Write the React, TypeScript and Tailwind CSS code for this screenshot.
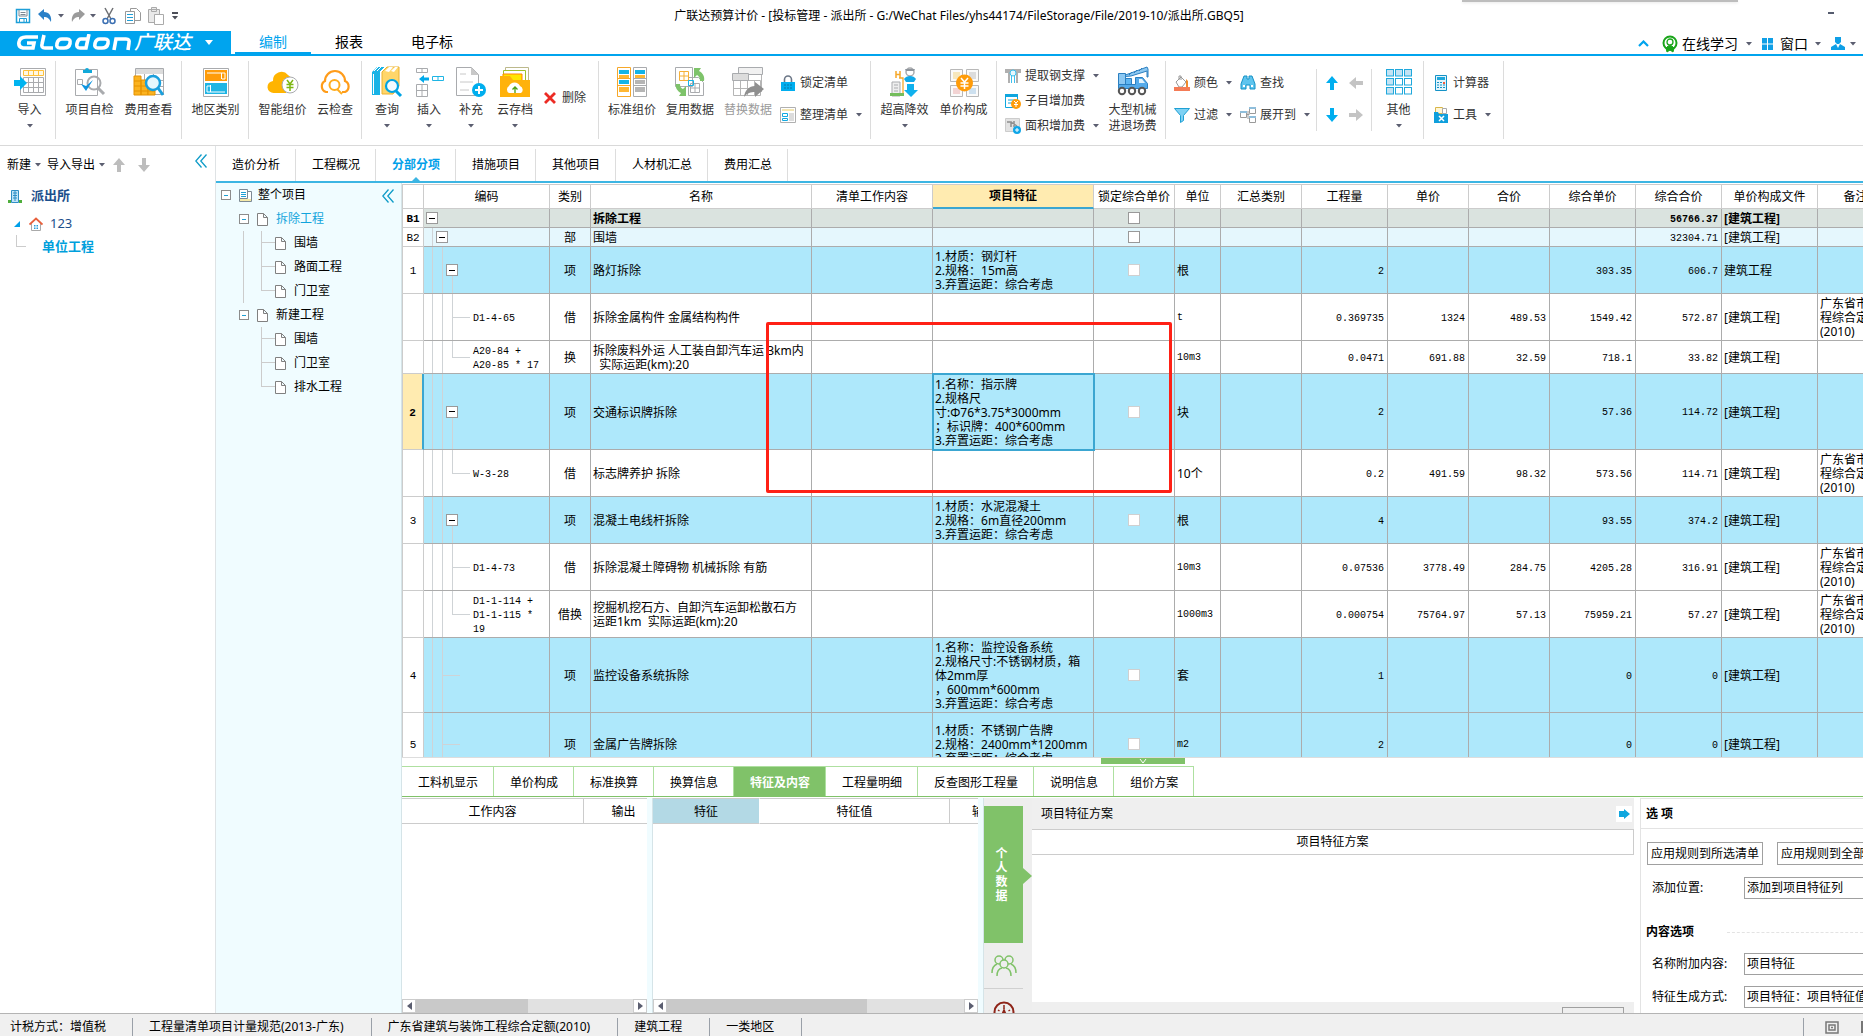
import { ReactNode } from "react";
import clsx from "clsx";

type Row = {
  no: string;
  kind: "part" | "section" | "item" | "quota";
  height: string;
  last?: boolean;
  leaf?: boolean;
  selected?: boolean;
  code?: string[];
  type?: string;
  name?: string[];
  feature?: string[];
  unit?: string;
  qty?: string;
  price?: string;
  total?: string;
  unitPrice?: string;
  sum?: string;
  file?: string;
  note?: boolean;
};

const rows: Row[] = [
  { no: "B1", kind: "part", height: "h-[19px]", name: ["拆除工程"], sum: "56766.37", file: "[建筑工程]" },
  { no: "B2", kind: "section", height: "h-[19px]", type: "部", name: ["围墙"], sum: "32304.71", file: "[建筑工程]" },
  {
    no: "1",
    kind: "item",
    height: "h-[47px]",
    type: "项",
    name: ["路灯拆除"],
    feature: ["1.材质：钢灯杆", "2.规格：15m高", "3.弃置运距：综合考虑"],
    unit: "根",
    qty: "2",
    unitPrice: "303.35",
    sum: "606.7",
    file: "建筑工程",
  },
  {
    no: "",
    kind: "quota",
    height: "h-[47px]",
    code: ["D1-4-65"],
    type: "借",
    name: ["拆除金属构件 金属结构构件"],
    unit: "t",
    qty: "0.369735",
    price: "1324",
    total: "489.53",
    unitPrice: "1549.42",
    sum: "572.87",
    file: "[建筑工程]",
    note: true,
  },
  {
    no: "",
    kind: "quota",
    height: "h-[33px]",
    last: true,
    code: ["A20-84 +", "A20-85 * 17"],
    type: "换",
    name: ["拆除废料外运 人工装自卸汽车运 3km内", "  实际运距(km):20"],
    unit: "10m3",
    qty: "0.0471",
    price: "691.88",
    total: "32.59",
    unitPrice: "718.1",
    sum: "33.82",
    file: "[建筑工程]",
  },
  {
    no: "2",
    kind: "item",
    height: "h-[76px]",
    selected: true,
    type: "项",
    name: ["交通标识牌拆除"],
    feature: ["1.名称：指示牌", "2.规格尺", "寸:Φ76*3.75*3000mm", "；标识牌：400*600mm", "3.弃置运距：综合考虑"],
    unit: "块",
    qty: "2",
    unitPrice: "57.36",
    sum: "114.72",
    file: "[建筑工程]",
  },
  {
    no: "",
    kind: "quota",
    height: "h-[47px]",
    last: true,
    code: ["W-3-28"],
    type: "借",
    name: ["标志牌养护 拆除"],
    unit: "10个",
    qty: "0.2",
    price: "491.59",
    total: "98.32",
    unitPrice: "573.56",
    sum: "114.71",
    file: "[建筑工程]",
    note: true,
  },
  {
    no: "3",
    kind: "item",
    height: "h-[47px]",
    type: "项",
    name: ["混凝土电线杆拆除"],
    feature: ["1.材质：水泥混凝土", "2.规格：6m直径200mm", "3.弃置运距：综合考虑"],
    unit: "根",
    qty: "4",
    unitPrice: "93.55",
    sum: "374.2",
    file: "[建筑工程]",
  },
  {
    no: "",
    kind: "quota",
    height: "h-[47px]",
    code: ["D1-4-73"],
    type: "借",
    name: ["拆除混凝土障碍物 机械拆除 有筋"],
    unit: "10m3",
    qty: "0.07536",
    price: "3778.49",
    total: "284.75",
    unitPrice: "4205.28",
    sum: "316.91",
    file: "[建筑工程]",
    note: true,
  },
  {
    no: "",
    kind: "quota",
    height: "h-[47px]",
    last: true,
    code: ["D1-1-114 +", "D1-1-115 *", "19"],
    type: "借换",
    name: ["挖掘机挖石方、自卸汽车运卸松散石方", "运距1km  实际运距(km):20"],
    unit: "1000m3",
    qty: "0.000754",
    price: "75764.97",
    total: "57.13",
    unitPrice: "75959.21",
    sum: "57.27",
    file: "[建筑工程]",
    note: true,
  },
  {
    no: "4",
    kind: "item",
    height: "h-[75px]",
    leaf: true,
    type: "项",
    name: ["监控设备系统拆除"],
    feature: ["1.名称：监控设备系统", "2.规格尺寸:不锈钢材质，箱", "体2mm厚", "，600mm*600mm", "3.弃置运距：综合考虑"],
    unit: "套",
    qty: "1",
    unitPrice: "0",
    sum: "0",
    file: "[建筑工程]",
  },
  {
    no: "5",
    kind: "item",
    height: "h-[63px]",
    leaf: true,
    type: "项",
    name: ["金属广告牌拆除"],
    feature: ["1.材质：不锈钢广告牌", "2.规格：2400mm*1200mm", "3.弃置运距：综合考虑"],
    unit: "m2",
    qty: "2",
    unitPrice: "0",
    sum: "0",
    file: "[建筑工程]",
  },
];

const columns = [
  { title: "", width: "w-[21px]" },
  { title: "编码", width: "w-[126px]" },
  { title: "类别", width: "w-[41px]" },
  { title: "名称", width: "w-[221px]" },
  { title: "清单工作内容", width: "w-[121px]" },
  { title: "项目特征", width: "w-[161px]" },
  { title: "锁定综合单价", width: "w-[81px]" },
  { title: "单位", width: "w-[46px]" },
  { title: "汇总类别", width: "w-[81px]" },
  { title: "工程量", width: "w-[86px]" },
  { title: "单价", width: "w-[81px]" },
  { title: "合价", width: "w-[81px]" },
  { title: "综合单价", width: "w-[86px]" },
  { title: "综合合价", width: "w-[86px]" },
  { title: "单价构成文件", width: "w-[96px]" },
  { title: "备注", width: "w-[76px]" },
];

const mainTabs = ["造价分析", "工程概况", "分部分项", "措施项目", "其他项目", "人材机汇总", "费用汇总"];
const detailTabs = ["工料机显示", "单价构成", "标准换算", "换算信息", "特征及内容", "工程量明细", "反查图形工程量", "说明信息", "组价方案"];
const statusItems = ["工程量清单项目计量规范(2013-广东)", "广东省建筑与装饰工程综合定额(2010)", "建筑工程", "一类地区"];

const Caret = ({ className }: { className?: string }) => (
  <svg width="6" height="4" viewBox="0 0 6 4" className={clsx("shrink-0", className)} fill="#5b5e70">
    <path d="M0 0h6L3 3.5z" />
  </svg>
);

const Svg = ({ size = 32, children }: { size?: number; children: ReactNode }) => (
  <svg width={size} height={size} viewBox={`0 0 ${size} ${size}`} fill="none" className="shrink-0">
    {children}
  </svg>
);

/* ---------- ribbon icons ---------- */

const ImportIcon = () => (
  <Svg>
    <path d="M6.500 2.500h25v27h-25z" fill="#fff" stroke="#a9abae" />
    <path d="M9.500 4.500h20v5h-20z M14.500 4.500v5 M19.500 4.500v5 M24.500 4.500v5" fill="#fff8e4" stroke="#ffc13a" />
    <path d="M9.500 11.500h20v15h-20z M14.500 11.500v15 M19.500 11.500v15 M24.500 11.500v15 M9.500 16.500h20 M9.500 21.500h20" stroke="#a9abae" />
    <path d="M0 14h6v-4l7 7-7 7v-4H0z" fill="#00b4f0" />
  </Svg>
);

const SelfCheckIcon = () => (
  <Svg>
    <path d="M1.500 3.500h22v26h-22z" stroke="#a9abae" />
    <path d="M9 4h2a2 2 0 0 1 4 0h3v3H9z" fill="#12a9d9" />
    <path d="M3.500 13.500h5v5h-5z" stroke="#a9abae" />
    <circle cx="20" cy="17" r="6.500" stroke="#a9abae" strokeWidth="2" />
    <path d="M24 22l6 6" stroke="#a9abae" strokeWidth="3" />
    <path d="M7 18l5 7 7-11-7 6z" fill="#0f95e0" />
  </Svg>
);

const CostIcon = () => (
  <Svg>
    <path d="M2.500 2.500h28v26h-28z M2.500 14.500h28 M2.500 20.500h28 M11.500 8v20 M20.500 8v20" stroke="#a9abae" />
    <path d="M3 3h27v5H3z" fill="#dcdcdc" />
    <path d="M1 10h7v19H1z M8 14h7v15H8z" fill="#fbb320" stroke="#e59200" />
    <path d="M15 20h7v9h-7z" fill="#fbb320" stroke="#e59200" />
    <path d="M1 15h7 M1 20h14 M1 25h14 M15 25h7" stroke="#e59200" />
    <circle cx="20" cy="17" r="7" fill="#e6f7fd" stroke="#1a9fdc" strokeWidth="2.500" />
    <path d="M25 22l5 7" stroke="#1a9fdc" strokeWidth="3" />
  </Svg>
);

const RegionIcon = () => (
  <Svg>
    <path d="M3.500 2.500h25v28h-25z" stroke="#a9abae" />
    <path d="M5 4h22v11H5z" fill="#ff9c0a" />
    <path d="M21.500 7v6 M7 7h18v6h-3" stroke="#fff" />
    <path d="M5 17h22v11H5z" fill="#1fb5e4" />
    <path d="M10.500 19v7 M25 26H7v-6h3" stroke="#fff" />
  </Svg>
);

const SmartPriceIcon = () => (
  <Svg>
    <path d="M7 27a6 6 0 0 1-1-12 8.500 8.500 0 0 1 15-6 8 8 0 0 1 4 5l-6 13z" fill="#ffb400" />
    <circle cx="23" cy="19" r="8" fill="#fff" stroke="#a9abae" />
    <path d="M20 14l3 4 3-4 M23 18v7 M19.500 18.500h7 M19.500 21.500h7" stroke="#7db713" strokeWidth="1.500" />
  </Svg>
);

const CloudCheckIcon = () => (
  <Svg>
    <path d="M9 26H7a6 6 0 0 1-1-11 10 10 0 0 1 20 0 6 6 0 0 1 0 11h-3" stroke="#ff9c1a" strokeWidth="2.200" />
    <circle cx="15.500" cy="19" r="5" stroke="#ffad1f" strokeWidth="2" />
    <path d="M18 23l5 5" stroke="#ffad1f" strokeWidth="2" />
  </Svg>
);

const QueryIcon = () => (
  <Svg>
    <path d="M1 6l5-5h8L9 6v23H1z" fill="#18b3e6" />
    <path d="M3 5l4-4 M6 5l4-4 M9 6l5-5 M2.500 8v20" stroke="#fff" />
    <path d="M11 6l5-5h12v19l-6 8H11z" fill="#ffd66a" stroke="#ecb231" />
    <path d="M14 5l4-4h4l-4 5 M20 5l4-4h3l-4 5" fill="#fff" />
    <circle cx="21" cy="20" r="6" fill="#f2fbff" stroke="#00a4e4" strokeWidth="2.200" />
    <path d="M25 25l5 5" stroke="#00a4e4" strokeWidth="3" />
  </Svg>
);

const InsertIcon = () => (
  <Svg>
    <path d="M3.500 2.500h11v4h-11z M9 2.500v4 M3.500 18.500h11v12h-11z M9 18.500v12 M3.500 24.500h11" stroke="#a9abae" />
    <path d="M19.500 10.500h11v4h-11z M25 10.500v4" stroke="#1fb5e4" />
    <path d="M6 13l5-4v2.500h5v3h-5V17z" fill="#00a9ea" />
  </Svg>
);

const SupplementIcon = () => (
  <Svg>
    <path d="M1.500 1.500h15l7 7v21h-22z" stroke="#a9abae" />
    <path d="M16 1v8h8z" fill="#c8c8c8" />
    <path d="M5 8h6 M5 16h13 M5 24h9" stroke="#c8c8c8" />
    <circle cx="24" cy="24" r="7" fill="#00aeee" />
    <path d="M24 20v8 M20 24h8" stroke="#fff" strokeWidth="2" />
  </Svg>
);

const ArchiveIcon = () => (
  <Svg>
    <path d="M6.500 1.500h23v17h-23z" fill="#fff" stroke="#bcb98c" />
    <path d="M4.500 4.500h22v14h-22z" fill="#fff" stroke="#9fc12b" />
    <path d="M4 8h19v8H4z" fill="#ffe600" stroke="#ff8400" />
    <path d="M1 10h10l3 4h17v17H1z" fill="#ffb20b" />
    <path d="M10 27a4 4 0 0 1 0-7 6 6 0 0 1 11 0 4 4 0 0 1 1 7z" fill="#fff" />
    <path d="M16 27v-6 M13.500 23.500L16 21l2.500 2.500" stroke="#4a9e12" strokeWidth="1.300" />
  </Svg>
);

const StandardIcon = () => (
  <Svg>
    <path d="M1.500 1.500h13v29h-13z" stroke="#f6a82a" />
    <path d="M17.500 1.500h13v29h-13z" stroke="#a9abae" />
    <path d="M3 4h10v4H3z M19 4h10v4H19z M3 14h10v4H3z" fill="#12b4e8" />
    <path d="M3 9h10v3H3z M19 9h10v3H19z M3 21h10v5H3z" fill="#ffb732" />
    <path d="M19 14h10v4H19z M19 21h10v5H19z" fill="#b5b5b5" />
    <path d="M1.500 12.500h13 M1.500 19.500h13" stroke="#f6a82a" />
    <path d="M17.500 12.500h13 M17.500 19.500h13" stroke="#a9abae" />
  </Svg>
);

const ReuseIcon = () => (
  <Svg>
    <path d="M1.500 1.500h17v19h-17z M14.500 11.500h10l5 5v13h-15z" fill="#fff" stroke="#a9abae" />
    <path d="M5.500 5.500h9v9h-9z M10 5.500v9 M5.500 10h9" stroke="#f6b13a" />
    <path d="M16.500 17.500h9v9h-9z M21 17.500v9 M16.500 22h9" stroke="#a9abae" />
    <path d="M14.500 14.500h5v5h-5z" stroke="#12b4e8" />
    <path d="M20 2h7l-2 3c4 2 6 6 5 10h-4c0-3-1-5-3-6l-3 3z" fill="#7ec36a" />
    <path d="M12 30H5l2-3c-4-2-6-6-5-9h4c0 3 1 4 3 5l3-3z" fill="#7ec36a" />
  </Svg>
);

const ReplaceIcon = () => (
  <Svg>
    <path d="M1.500 14.500h27v15h-27z M8.500 14v16 M15.500 14v16 M22.500 14v16 M1.500 22.500h27 M29.500 8v18" stroke="#b5b5b5" />
    <path d="M6.500 1.500h24v7h-24z" fill="#f1f1f1" stroke="#a9abae" />
    <path d="M.500 7.500h16v7H.500z" fill="#dcdcdc" stroke="#a9abae" />
    <path d="M12 31c1-7 5-11 11-11v-4l9 7-9 8v-5c-4 0-8 1-11 5z" fill="#8f8f8f" />
  </Svg>
);

const HeightIcon = () => (
  <Svg>
    <path d="M7 5v7 M11 5v7 M7 8.500h4" stroke="#f6a82a" strokeWidth="1.500" />
    <path d="M10 12h4v18" stroke="#f6a82a" strokeWidth="1.300" />
    <circle cx="21" cy="6" r="4" fill="#fff" stroke="#a9abae" strokeWidth="1.500" />
    <path d="M16 3h10l-1 2h-8z" fill="#8f959c" />
    <path d="M15 13q2-3 6-3t6 3l-2 3h-8z" fill="#12a9e8" />
    <path d="M3 16h8v14H3z" fill="#eee" stroke="#a9abae" />
    <path d="M5 19h4 M5 22h4 M5 25h4" stroke="#a9abae" />
    <path d="M1 27h14v3H1z" fill="#74bd5c" />
    <path d="M18 18h7v6h4l-7 7-7-7h3z" fill="#0fb1ee" />
  </Svg>
);

const UnitPriceIcon = () => (
  <Svg>
    <path d="M2.500 3.500h12v12h-12z M18.500 3.500h12v12h-12z M2.500 19.500h12v11h-12z M18.500 19.500h12v11h-12z" fill="#fafafa" stroke="#b8b8b8" />
    <path d="M5 6h7v7H5z" fill="#f6e7bd" />
    <path d="M21 6h7v7h-7z" fill="#dcdcdc" />
    <path d="M5 22h7v6H5z" fill="#f2d3d3" />
    <path d="M21 22h7v6h-7z" fill="#cde0ef" />
    <circle cx="16.500" cy="17" r="8.500" fill="#ff9c0a" />
    <path d="M13 12l3.500 4 3.500-4 M16.500 16v7 M12.500 17h8 M12.500 20h8" stroke="#fff" strokeWidth="1.500" />
  </Svg>
);

const CraneIcon = () => (
  <Svg>
    <path d="M3 11L22 4l8-3 1 2v8h-1V5L14 10z" fill="#8cc8f2" stroke="#2b7fc0" />
    <path d="M12 9l3-3 M17 7l3-3 M22 5l3-3" stroke="#2b7fc0" />
    <path d="M1.500 7.500h7v11h-7z" fill="#8cc8f2" stroke="#2b7fc0" />
    <path d="M8.500 12.500h6v6h-6z" fill="#5fb6f2" stroke="#2b7fc0" />
    <path d="M18.500 11.500h7l5 6v5h-29v-4h17z" fill="#55abea" stroke="#2b7fc0" />
    <path d="M22 13h3l3 4h-6z" fill="#e4f4fd" />
    <g fill="#fff" stroke="#555" strokeWidth="2">
      <circle cx="5" cy="25" r="3.200" />
      <circle cx="15" cy="25" r="3.200" />
      <circle cx="25" cy="25" r="3.200" />
    </g>
  </Svg>
);

const OtherIcon = () => (
  <Svg>
    <g stroke="#1fa8dc">
      {[4, 13, 22].map((y, r) =>
        [4, 13, 22].map((x, c) => (
          <rect key={`${x}-${y}`} x={x - 0.5} y={y - 0.5} width="7" height="6.500" fill={r === 0 || c === 0 ? "#c4e3f4" : "#fff"} />
        ))
      )}
    </g>
  </Svg>
);

const DeleteIcon = () => (
  <Svg size={12}>
    <path d="M1 1l10 10 M11 1L1 11" stroke="#ec2b24" strokeWidth="2.800" />
  </Svg>
);

const LockIcon = () => (
  <Svg size={16}>
    <path d="M4.500 8V4.500a3.500 3.500 0 0 1 7 0V8" stroke="#6b7686" strokeWidth="1.600" />
    <path d="M1 7h14v9H1z" fill="#00aeef" />
    <path d="M4 10h8 M4 13h8" stroke="#0779a8" strokeDasharray="2 1" />
  </Svg>
);

const TidyIcon = () => (
  <Svg size={16}>
    <path d="M.500 .500h15v15H.500z" stroke="#b0b0b0" />
    <path d="M2 2h12v2H2z" fill="#f3e5b1" />
    <path d="M2.500 6.500h5v3h-5z M2.500 11.500h5v2h-5z" stroke="#12a9e0" />
    <path d="M9 6h5v8H9z" fill="#dcdcdc" />
  </Svg>
);

const SteelIcon = () => (
  <Svg size={16}>
    <path d="M0 1h16v4h-3v10h-2V7a3 3 0 0 0-6 0v8H3V5H0z" fill="#b0b0b0" />
    <circle cx="8" cy="5" r="3" fill="#e4f7fd" stroke="#3dc0ee" />
    <path d="M6.500 8v7 M9.500 8v7" stroke="#3dc0ee" />
  </Svg>
);

const SubItemIcon = () => (
  <Svg size={16}>
    <path d="M.500 1.500h12v13H.500z" fill="#fff" stroke="#0fa6de" />
    <path d="M0 1h13v3H0z" fill="#0fa6de" />
    <path d="M3 7h7 M3 10h5" stroke="#0fa6de" />
    <circle cx="11" cy="11" r="5" fill="#ff9c0a" />
    <path d="M9 8l2 2 2-2 M11 10v4 M9 11.500h4" stroke="#fff" />
  </Svg>
);

const AreaIcon = () => (
  <Svg size={16}>
    <path d="M.500 .500h14v13H.500z" fill="#e3e3e3" stroke="#ccc" />
    <path d="M2 4h4v5 M6 4l6 4 M9 3v6" stroke="#8f8f8f" strokeWidth="1.500" />
    <circle cx="12" cy="12" r="4" fill="#0fa6e8" />
    <path d="M12 10v4 M10 12h4" stroke="#fff" />
  </Svg>
);

const ColorIcon = () => (
  <Svg size={16}>
    <path d="M2 7l5-5 5 5-4 5H5z" fill="#fff" stroke="#999" />
    <path d="M5 5V1h2v4" stroke="#999" />
    <path d="M12 4l2 2v6h-2z" fill="#f08a2c" />
    <path d="M0 12h16v4H0z" fill="#f47b56" />
  </Svg>
);

const FilterIcon = () => (
  <Svg size={16}>
    <path d="M.500 1.500h15l-6 7v5l-3 2v-7z" fill="#7fd1f3" stroke="#1fa0d4" />
  </Svg>
);

const FindIcon = () => (
  <Svg size={16}>
    <path d="M4 1h3v3h2V1h3l3 8v5h-5v-4H6v4H1V9z" fill="#5fc4ee" stroke="#1592c6" />
    <path d="M3 11h2 M11 11h2" stroke="#fff" strokeWidth="2" />
  </Svg>
);

const ExpandToIcon = () => (
  <Svg size={16}>
    <path d="M.500 4.500h6v6h-6z M9.500 .500h6v6h-6z M9.500 9.500h6v6h-6z M6.500 7.500h3 M8 4v8" fill="#fff" stroke="#9a9a9a" />
    <path d="M0 4h7v2H0z M9 0h7v2H9z M9 9h7v2H9z" fill="#8fbedb" />
  </Svg>
);

const CalcIcon = () => (
  <Svg size={16}>
    <path d="M2.500 .500h11v15h-11z" fill="#e2f4fc" stroke="#1592c6" />
    <path d="M4 2h8v3H4z" fill="#1fa8dc" />
    <path d="M4 7.500h8 M4 10h8 M4 12.500h8" stroke="#1592c6" strokeDasharray="2 1" />
    <path d="M10 7h2v2h-2z" fill="#f25c3b" />
  </Svg>
);

const ToolIcon = () => (
  <Svg size={16}>
    <path d="M2.500 .500h7v6h-7z" fill="#fff6d6" stroke="#d9b64a" />
    <path d="M9.500 1.500h4v5h-4z" fill="#fff" stroke="#aaa" />
    <path d="M1 5h4l1 2h9v9H1z" fill="#0f9fdc" />
    <path d="M6 9l5 5 M11 9l-5 5" stroke="#fff" strokeWidth="1.500" />
  </Svg>
);

const Arrow = ({ dir, color }: { dir: "up" | "down" | "left" | "right"; color: string }) => (
  <svg
    width="16"
    height="16"
    viewBox="0 0 16 16"
    fill={color}
    className={clsx("shrink-0", dir === "down" && "rotate-180", dir === "left" && "-rotate-90", dir === "right" && "rotate-90")}
  >
    <path d="M8 1l6 7h-4v7H6V8H2z" />
  </svg>
);

/* ---------- ribbon building blocks ---------- */

const Group = ({ children, className, short }: { children: ReactNode; className?: string; short?: boolean }) => (
  <div className={clsx("flex border-r border-[#dcdcdc]", short ? "mt-2 mb-2 [&>*]:-mt-2" : "", className)}>{children}</div>
);

type BigProps = { icon: ReactNode; label: string; width?: string; caret?: boolean; disabled?: boolean; label2?: string };

const Big = ({ icon, label, width = "w-[59px]", caret, disabled, label2 }: BigProps) => (
  <button className={clsx("flex shrink-0 flex-col items-center pt-[5px] whitespace-nowrap", width, disabled ? "text-[#9a9a9a]" : "text-[#333]")}>
    {icon}
    <span className="mt-1 leading-4">{label}</span>
    {label2 && <span className="leading-4">{label2}</span>}
    {caret && <Caret className="mt-1.5" />}
  </button>
);

const Small = ({ icon, label, caret, height = "h-8" }: { icon: ReactNode; label: string; caret?: boolean; height?: string }) => (
  <button className={clsx("flex shrink-0 items-center gap-1 whitespace-nowrap text-[#333]", height)}>
    {icon}
    {label}
    {caret && <Caret className="ml-1" />}
  </button>
);

function Ribbon() {
  return (
    <div className="flex h-[90px] overflow-hidden border-b border-[#d9d9d9] pt-[5px] pb-[6px]">
      <Group className="pl-1">
        <Big icon={<ImportIcon />} label="导入" width="w-[51px]" caret />
      </Group>
      <Group className="pl-1 pr-[3px]">
        <Big icon={<SelfCheckIcon />} label="项目自检" />
        <Big icon={<CostIcon />} label="费用查看" />
      </Group>
      <Group className="pl-1 pr-[3px]">
        <Big icon={<RegionIcon />} label="地区类别" />
      </Group>
      <Group className="pl-1 pr-[3px]">
        <Big icon={<SmartPriceIcon />} label="智能组价" />
        <Big icon={<CloudCheckIcon />} label="云检查" width="w-[46px]" />
      </Group>
      <Group className="pl-1 pr-3">
        <Big icon={<QueryIcon />} label="查询" width="w-[42px]" caret />
        <Big icon={<InsertIcon />} label="插入" width="w-[42px]" caret />
        <Big icon={<SupplementIcon />} label="补充" width="w-[42px]" caret />
        <Big icon={<ArchiveIcon />} label="云存档" width="w-[46px]" caret />
        <button className="mb-1 ml-1.5 flex items-center gap-1.5 text-[#333]">
          <DeleteIcon />
          删除
        </button>
      </Group>
      <Group className="pl-1 pr-2">
        <Big icon={<StandardIcon />} label="标准组价" width="w-[58px]" />
        <Big icon={<ReuseIcon />} label="复用数据" width="w-[58px]" />
        <Big icon={<ReplaceIcon />} label="替换数据" width="w-[58px]" disabled />
        <div className="pt-[6px] pl-[3px]">
          <Small icon={<LockIcon />} label="锁定清单" />
          <Small icon={<TidyIcon />} label="整理清单" caret />
        </div>
      </Group>
      <Group className="pl-1 pr-[3px]">
        <Big icon={<HeightIcon />} label="超高降效" caret />
        <Big icon={<UnitPriceIcon />} label="单价构成" />
      </Group>
      <Group className="pl-2 pr-[3px]">
        <div className="w-[98px] pt-0.5">
          <Small icon={<SteelIcon />} label="提取钢支撑" caret height="h-[25px]" />
          <Small icon={<SubItemIcon />} label="子目增加费" height="h-[25px]" />
          <Small icon={<AreaIcon />} label="面积增加费" caret height="h-[25px]" />
        </div>
        <Big icon={<CraneIcon />} label="大型机械" label2="进退场费" />
      </Group>
      <Group className="gap-2 pl-2 pr-1.5" short>
        <div className="pt-[6px]">
          <Small icon={<ColorIcon />} label="颜色" caret />
          <Small icon={<FilterIcon />} label="过滤" caret />
        </div>
        <div className="pt-[6px]">
          <Small icon={<FindIcon />} label="查找" />
          <Small icon={<ExpandToIcon />} label="展开到" caret />
        </div>
      </Group>
      <Group className="px-[7px]" short>
        <div className="grid h-[70px] grid-cols-2 gap-x-2 pt-[6px]">
          <button aria-label="上移" className="flex h-8 items-center"><Arrow dir="up" color="#00aeef" /></button>
          <button aria-label="升级" className="flex h-8 items-center"><Arrow dir="left" color="#c4c4c4" /></button>
          <button aria-label="下移" className="flex h-8 items-center"><Arrow dir="down" color="#00aeef" /></button>
          <button aria-label="降级" className="flex h-8 items-center"><Arrow dir="right" color="#c4c4c4" /></button>
        </div>
      </Group>
      <Group className="pl-0.5">
        <Big icon={<OtherIcon />} label="其他" width="w-[49px]" caret />
      </Group>
      <Group className="pl-[9px] pr-3">
        <div className="pt-[6px]">
          <Small icon={<CalcIcon />} label="计算器" />
          <Small icon={<ToolIcon />} label="工具" caret />
        </div>
      </Group>
    </div>
  );
}

function TitleBar() {
  return (
    <div className="flex h-[31px] items-center">
      <div className="flex w-[480px] shrink-0 items-center pl-[15px]">
        <Svg size={16}>
          <path d="M1.500 1.500h13v13h-13z" stroke="#1e9fd8" strokeWidth="1.500" />
          <path d="M4 2v6h8V2 M5.500 4.500h5 M5.500 6.500h5" stroke="#7d8a94" />
          <path d="M4.500 10.500h7v4h-7z M9 11v3" stroke="#1e9fd8" />
        </Svg>
        <svg width="14" height="14" viewBox="0 0 14 14" fill="#2a80c8" className="ml-[7px]">
          <path d="M0 5l6-5v3c5 0 8 4 7 10-2-4-4-5-7-5v3z" />
        </svg>
        <Caret className="ml-[6px]" />
        <svg width="14" height="14" viewBox="0 0 14 14" fill="#9b9b9b" className="ml-[7px]">
          <path d="M14 5L8 0v3C3 3 0 7 1 13c2-4 4-5 7-5v3z" />
        </svg>
        <Caret className="ml-[5px]" />
        <svg width="14" height="18" viewBox="0 0 14 18" fill="none" className="ml-[6px]">
          <path d="M3 1l6 11 M11 1L5 12" stroke="#6d6f73" strokeWidth="1.500" />
          <circle cx="3.500" cy="14" r="2.500" stroke="#3b6fb2" strokeWidth="1.500" />
          <circle cx="10.500" cy="14" r="2.500" stroke="#3b6fb2" strokeWidth="1.500" />
        </svg>
        <svg width="16" height="16" viewBox="0 0 16 16" fill="#fff" className="ml-[9px]">
          <path d="M5.500 .500h6l4 4v8h-10z" stroke="#999" />
          <path d="M.500 3.500h9v12h-9z" stroke="#999" />
          <path d="M2 6.500h6 M2 9.500h6 M2 12.500h6" stroke="#1e9fd8" />
        </svg>
        <svg width="16" height="18" viewBox="0 0 16 18" fill="#e9e9e9" className="ml-[7px]">
          <path d="M.500 2.500h11v13H.500z M3.500 .500h5v4h-5z" stroke="#aaa" />
          <path d="M6.500 7.500h9v10h-9z" fill="#fff" stroke="#aaa" />
        </svg>
        <svg width="6" height="8" viewBox="0 0 6 8" fill="#4c4f58" className="ml-[8px]">
          <path d="M0 0h6v2H0z M0 4h6L3 7.500z" />
        </svg>
      </div>
      <h1 className="flex-1 text-center text-xs">广联达预算计价 - [投标管理 - 派出所 - G:/WeChat Files/yhs44174/FileStorage/File/2019-10/派出所.GBQ5]</h1>
      <div className="flex h-full w-[425px] shrink-0 items-start">
        <div className="ml-6 h-[2px] w-[276px] bg-[#bdbdbd] shadow" />
        <button aria-label="最小化" className="mt-3 ml-[90px] h-[2px] w-[6px] bg-[#555b6e]" />
      </div>
    </div>
  );
}

function MenuBar() {
  return (
    <div className="flex h-[25px] items-stretch border-b-2 border-[#00a4ee]">
      <button className="flex w-[231px] items-center bg-[#00a4ee] pl-4 text-white">
        <svg width="116" height="17" viewBox="0 0 116 17" fill="none" stroke="#fff" strokeWidth="3.600" aria-label="Glodon">
          <path d="M22 3H10Q4 3 3 8T7 14h10l1-5h-7" />
          <path d="M28 1l-2 9q-1 4 3 4h8" />
          <path d="M46 5h5q4 0 3 4.500T48 14h-4q-4 0-3-4.500T46 5" />
          <path d="M73 0l-3 14h-6q-4 0-3-4.500T65 5h6" />
          <path d="M84 5h5q4 0 3 4.500T86 14h-4q-4 0-3-4.500T84 5" />
          <path d="M98 16l2-11h10q4 0 3 4l-1 7" />
        </svg>
        <span className="ml-0.5 text-[19px] leading-none font-medium italic">广联达</span>
        <svg width="8" height="5" viewBox="0 0 8 5" fill="#fff" className="ml-3.5">
          <path d="M0 0h8L4 5z" />
        </svg>
      </button>
      <nav className="ml-1 flex text-sm">
        <a href="#edit" className="flex w-[76px] items-center justify-center border-b-2 border-[#00a4ee] text-[#00a4ee]">编制</a>
        <a href="#report" className="flex w-[76px] items-center justify-center pb-0.5">报表</a>
        <a href="#bid" className="flex w-[90px] items-center justify-center pb-0.5">电子标</a>
      </nav>
      <div className="ml-auto flex items-center pt-0.5 pr-[7px] text-sm">
        <button aria-label="收起功能区">
          <svg width="11" height="7" viewBox="0 0 11 7" fill="none" stroke="#00a4ee" strokeWidth="2.200">
            <path d="M1 6l4.500-4.500L10 6" />
          </svg>
        </button>
        <button className="ml-[13px] flex items-center gap-1">
          <svg width="16" height="18" viewBox="0 0 16 18" fill="none" stroke="#1aa51a">
            <circle cx="8" cy="8" r="6.500" strokeWidth="2" />
            <circle cx="8" cy="7" r="3" strokeWidth="1.300" />
            <path d="M4 13q4-5 8 0l-1 4-3-2-3 2z" fill="#1aa51a" />
          </svg>
          在线学习
          <Caret className="ml-1" />
        </button>
        <button className="ml-[10px] flex items-center gap-[7px]">
          <svg width="11" height="12" viewBox="0 0 11 12" fill="#0f9fe6">
            <path d="M0 0h5v5.500H0z M6 0h5v5.500H6z M0 6.500h5V12H0z M6 6.500h5V12H6z" />
          </svg>
          窗口
          <Caret />
        </button>
        <button aria-label="用户" className="ml-[10px] flex items-center gap-[5px]">
          <svg width="14" height="13" viewBox="0 0 14 13" fill="#0f9fe6">
            <path d="M4 0h6v5L8 7H6L4 5z M0 13v-3l5-3 2 4 2-4 5 3v3z" />
          </svg>
          <Caret />
        </button>
      </div>
    </div>
  );
}

const Collapse = () => (
  <button aria-label="收起" className="shrink-0">
    <svg width="12" height="14" viewBox="0 0 12 14" fill="none" stroke="#0f9cc8" strokeWidth="1.300">
      <path d="M6.500 .500L.800 7l5.700 6.500 M11.500 .500L5.800 7l5.700 6.500" />
    </svg>
  </button>
);

function ProjectPanel() {
  return (
    <aside className="flex w-[216px] shrink-0 flex-col border-r border-[#dfe3e5]">
      <div className="flex h-[37px] items-center pr-2 pl-[7px]">
        <button className="flex items-center gap-1">新建<Caret /></button>
        <button className="ml-1.5 flex items-center gap-1">导入导出<Caret /></button>
        <button aria-label="上移" className="ml-[6px]"><Arrow dir="up" color="#bdbdbd" /></button>
        <button aria-label="下移" className="ml-[9px]"><Arrow dir="down" color="#bdbdbd" /></button>
        <div className="mb-1 ml-auto"><Collapse /></div>
      </div>
      <ul>
        <li className="flex h-[26px] items-center gap-[9px] pl-2 text-[13px] font-bold text-[#1b4f8c]">
          <svg width="14" height="14" viewBox="0 0 14 14" fill="none">
            <path d="M3.500 1.500h7v12h-7z" fill="#bfe4f8" stroke="#2f8fc6" />
            <path d="M5 4h4 M5 6.500h4 M5 9h4 M7 2v10" stroke="#2f8fc6" />
            <path d="M0 11h3v3H0z M11 11h3v3h-3z" fill="#4fae3c" />
          </svg>
          派出所
        </li>
        <li className="flex h-[30px] items-center pl-[14px] text-[13px] text-[#1b4f8c]">
          <svg width="6" height="6" viewBox="0 0 6 6" fill="#00a0e9"><path d="M6 0v6H0z" /></svg>
          <svg width="14" height="14" viewBox="0 0 14 14" fill="none" className="mr-[7px] ml-[9px]">
            <path d="M2.500 6v7.500h9V6" fill="#fff" stroke="#aaa" />
            <path d="M.500 7.500L7 1.500l6.500 6" stroke="#e8603c" strokeWidth="1.800" />
            <path d="M5 8h1.500v1.500H5z M7.500 8H9v1.500H7.500z M5 10.500h1.500V12H5z M7.500 10.500H9V12H7.500z" fill="#2a9edb" />
          </svg>
          123
        </li>
        <li className="flex h-4 items-center pl-4 text-[13px] font-bold text-[#009fdc]">
          <span className="mb-3 h-3 w-[10px] border-b border-l border-[#ccc]" />
          <span className="ml-4">单位工程</span>
        </li>
      </ul>
    </aside>
  );
}

const DocIcon = () => (
  <svg width="11" height="13" viewBox="0 0 11 13" fill="#fff" stroke="#808080" className="shrink-0">
    <path d="M.500 .500h6l4 4v8H.500z M6.500 .500v4h4" />
  </svg>
);

const TreeToggle = () => (
  <button aria-label="折叠" className="flex h-[10px] w-[10px] items-center justify-center border border-[#8c8c8c] bg-white">
    <span className="h-px w-1 bg-[#1fa0d4]" />
  </button>
);

const Branch = ({ title, items, active, line }: { title: string; items: string[]; active?: boolean; line?: boolean }) => (
  <li>
    <div className={clsx("flex h-6 items-center pl-[23px]", active && "text-[#12a4dc]")}>
      <TreeToggle />
      <span className="ml-2"><DocIcon /></span>
      <span className="ml-2">{title}</span>
    </div>
    <ul className={clsx("ml-[27px] border-l", line ? "border-[#ccc]" : "border-transparent")}>
      {items.map((item, i) => (
        <li key={item} className="flex h-6 items-center pl-[17px]">
          <span className="flex h-6 w-[14px] flex-col">
            <span className="h-3 border-b border-l border-[#ccc]" />
            <span className={clsx("h-3 border-l", i < items.length - 1 ? "border-[#ccc]" : "border-transparent")} />
          </span>
          <DocIcon />
          <span className="ml-2">{item}</span>
        </li>
      ))}
    </ul>
  </li>
);

function SectionTree() {
  return (
    <aside className="w-[186px] shrink-0 border-r border-[#d5e4e8] bg-[#f0fcff]">
      <ul>
        <li className="flex h-6 items-center pr-[7px] pl-[5px]">
          <TreeToggle />
          <svg width="13" height="13" viewBox="0 0 13 13" fill="#fff" stroke="#7d8a94" className="ml-2">
            <path d="M.500 .500h8v9h-8z M8.500 2.500h4v10H.500v-3" />
            <path d="M2 3.500h5 M2 5.500h5 M2 7.500h5" stroke="#1fa0d4" />
            <path d="M1 10h11v2H1z" fill="#f5e9a8" stroke="none" />
          </svg>
          <span className="ml-1.5">整个项目</span>
          <span className="mt-0.5 ml-auto flex"><Collapse /></span>
        </li>
        <Branch title="拆除工程" items={["围墙", "路面工程", "门卫室"]} active line />
        <Branch title="新建工程" items={["围墙", "门卫室", "排水工程"]} />
      </ul>
    </aside>
  );
}

const GridToggle = () => (
  <button aria-label="折叠" className="flex h-3 w-3 shrink-0 items-center justify-center border border-[#999] bg-white">
    <span className="h-px w-1.5 bg-black" />
  </button>
);

const guide = "border-[#cfd3d6]";

/* vertical guides and connectors in front of the code text */
function CodeCell({ row }: { row: Row }) {
  if (row.kind === "part") {
    return <div className="flex h-full items-center pl-0.5"><GridToggle /></div>;
  }
  if (row.kind === "section") {
    return (
      <div className="flex h-full items-center pl-2">
        <span className={clsx("flex h-full w-1 border-l", guide)} />
        <GridToggle />
      </div>
    );
  }
  return (
    <div className="flex h-full pl-2">
      <span className={clsx("w-[10px] shrink-0 border-l", guide)} />
      {row.kind === "quota" && (
        <>
          <span className={clsx("w-[10px] shrink-0 border-l", guide)} />
          <span className="flex w-[18px] shrink-0 flex-col">
            <span className={clsx("flex-1 border-b border-l", guide)} />
            <span className={clsx("flex-1 border-l", row.last ? "border-transparent" : guide)} />
          </span>
          <span className="flex flex-col justify-center pt-[3px] pl-[3px] font-['Liberation_Mono',monospace] text-[10px] leading-[14px] whitespace-pre">
            {row.code?.map((line) => <span key={line}>{line}</span>)}
          </span>
        </>
      )}
      {row.kind === "item" && row.leaf && (
        <span className="flex w-[18px] flex-col">
          <span className={clsx("flex-1 border-b border-l", guide)} />
          <span className={clsx("flex-1 border-l", guide)} />
        </span>
      )}
      {row.kind === "item" && !row.leaf && (
        <>
          <span className={clsx("w-1 border-l", guide)} />
          <span className="flex w-3 flex-col">
            <span className="flex-1" />
            <GridToggle />
            <span className={clsx("ml-1.5 flex-1 border-l", guide)} />
          </span>
        </>
      )}
    </div>
  );
}

const rowBg = { part: "bg-[#dae3df]", section: "bg-[#e5f7fd]", item: "bg-[#aee8fb]", quota: "bg-white" };
const edge = "overflow-hidden border-r border-b border-[#acacac] p-0";
const cell = `${edge} pt-0.5 whitespace-pre`;
const num = `${edge} pt-[3px] pr-[3px] text-right font-['Liberation_Mono',monospace] text-[10px]`;

function Grid() {
  return (
    <div className="relative min-h-0 flex-1 overflow-hidden border-b border-[#ddd]">
      <table className="w-[1472px] table-fixed border-separate border-spacing-0 border-l border-[#ccc] leading-[14px]">
        <colgroup>
          {columns.map((c) => <col key={c.title} className={c.width} />)}
        </colgroup>
        <thead>
          <tr className="h-[25px]">
            {columns.map((c) => (
              <th
                key={c.title}
                className={clsx(
                  "border-t border-r border-b border-[#ccc] p-0 whitespace-nowrap",
                  c.title === "项目特征" ? "border-b-2 border-b-[#3ba6d1] bg-[#ffebb0] font-bold" : "font-normal"
                )}
              >
                {c.title}
              </th>
            ))}
          </tr>
        </thead>
        <tbody>
          {rows.map((row, i) => (
            <tr key={i} className={clsx(row.height, rowBg[row.kind], row.kind === "part" && "font-bold")}>
              <td
                className={clsx(
                  "border-b border-[#ccc] p-0 pt-0.5 text-center font-['Liberation_Mono',monospace] text-[11px]",
                  row.selected ? "border-r-2 border-r-[#3ba6d1] bg-[#ffebb0] font-bold" : "border-r bg-white"
                )}
              >
                {row.no}
              </td>
              <td className={clsx(edge, "h-px")}><CodeCell row={row} /></td>
              <td className={clsx(cell, "text-center")}>{row.type}</td>
              <td className={clsx(cell, "pl-0.5")}>{row.name?.join("\n")}</td>
              <td className={cell} />
              <td className={clsx(cell, "pl-0.5", row.selected && "outline-2 -outline-offset-1 outline-[#3ba6d1]")}>
                {row.feature?.join("\n")}
              </td>
              <td className={edge}>
                {row.kind !== "quota" && (
                  <input
                    type="checkbox"
                    aria-label={`锁定综合单价 ${row.no}`}
                    className={clsx(
                      "mx-auto block h-3 w-3 appearance-none border bg-white",
                      row.kind === "item" ? "border-[#d0d0d0]" : "border-[#999]"
                    )}
                  />
                )}
              </td>
              <td className={clsx(cell, "pl-0.5", /^[\w]+$/.test(row.unit ?? "") && "font-['Liberation_Mono',monospace] text-[10px]")}>{row.unit}</td>
              <td className={cell} />
              <td className={num}>{row.qty}</td>
              <td className={num}>{row.price}</td>
              <td className={num}>{row.total}</td>
              <td className={num}>{row.unitPrice}</td>
              <td className={num}>{row.sum}</td>
              <td className={clsx(cell, "pl-0.5")}>{row.file}</td>
              <td className={clsx(cell, "pl-0.5")}>{row.note && "广东省市政工\n程综合定额\n(2010)"}</td>
            </tr>
          ))}
        </tbody>
      </table>
      <div className="pointer-events-none absolute top-[138px] left-[364px] h-[171px] w-[406px] rounded-xs border-3 border-[#ff2015]" />
    </div>
  );
}

const ScrollBar = ({ thumb }: { thumb: string }) => (
  <div className="flex h-[14px] items-stretch bg-[#e1e1e1]">
    <button aria-label="向左滚动" className="flex w-[14px] items-center justify-center border border-[#ccc] bg-white">
      <svg width="5" height="8" viewBox="0 0 5 8" fill="#5b5e70"><path d="M5 0v8L0 4z" /></svg>
    </button>
    <div className={clsx("bg-[#c9c9c9]", thumb)} />
    <button aria-label="向右滚动" className="ml-auto flex w-[14px] items-center justify-center border border-[#ccc] bg-white">
      <svg width="5" height="8" viewBox="0 0 5 8" fill="#5b5e70"><path d="M0 0v8l5-4z" /></svg>
    </button>
  </div>
);

const th = "overflow-hidden border-t border-r border-b border-[#ccc] p-0 pt-0.5 font-normal whitespace-nowrap";
const field = "h-[22px] flex-1 appearance-none border border-[#a0a0a0] bg-white pl-0.5 text-xs";

function DetailPanel() {
  return (
    <div className="flex h-[216px] overflow-hidden pt-px">
      <div className="flex w-[245px] shrink-0 flex-col">
        <table className="w-full table-fixed border-separate border-spacing-0">
          <thead>
            <tr className="h-[26px]">
              <th className={clsx(th, "w-[182px]")}>工作内容</th>
              <th className={clsx(th, "border-r-0 pl-4")}>输出</th>
            </tr>
          </thead>
        </table>
        <div className="mt-auto"><ScrollBar thumb="w-[112px]" /></div>
      </div>
      <div className="w-[6px] shrink-0 border-r border-[#d5e4e8] bg-[#f0fcff]" />
      <div className="flex w-[325px] shrink-0 flex-col">
        <table className="w-full table-fixed border-separate border-spacing-0">
          <thead>
            <tr className="h-[26px]">
              <th className={clsx(th, "w-[107px] border-r-white bg-[#b3d9e5]")}>特征</th>
              <th className={clsx(th, "w-[190px]")}>特征值</th>
              <th className={clsx(th, "border-r-0 pl-[22px] text-left")}>输出</th>
            </tr>
          </thead>
        </table>
        <div className="mt-auto"><ScrollBar thumb="w-[200px]" /></div>
      </div>
      <div className="w-[6px] shrink-0 border-r border-[#d5e4e8] bg-[#f0fcff]" />
      <div className="relative w-12 shrink-0 bg-[#eee] pt-2">
        <button className="flex h-[137px] w-[39px] flex-col items-center justify-center bg-[#80c269] pr-1 leading-[14px] font-bold text-white">
          {"个人数据".split("").map((c) => <span key={c}>{c}</span>)}
        </button>
        <svg width="9" height="16" viewBox="0 0 9 16" fill="#80c269" className="absolute top-[70px] left-[39px]">
          <path d="M0 0l9 8-9 8z" />
        </svg>
        <button aria-label="共享数据" className="flex h-[46px] w-[39px] items-center justify-center border-b border-[#d0d0d0]">
          <svg width="26" height="21" viewBox="0 0 26 21" fill="none" stroke="#80c269" strokeWidth="1.500">
            <circle cx="8" cy="5" r="4" />
            <circle cx="18" cy="5" r="4" />
            <circle cx="13" cy="9" r="4" fill="#eee" />
            <path d="M1 18q0-7 5-9 M25 18q0-7-5-9 M6 21q0-7 5-8 M20 21q0-7-5-8" />
          </svg>
        </button>
        <button aria-label="指标" className="flex w-[39px] justify-center pt-3">
          <svg width="22" height="22" viewBox="0 0 22 22" fill="none" stroke="#8e2418" strokeWidth="2">
            <circle cx="11" cy="11" r="9.500" />
            <path d="M5 9l1.500 1 M17 9l-1.500 1 M11 4v4" strokeWidth="1.500" />
            <path d="M8 14l3-7 3 7z" fill="#8e2418" stroke="none" />
          </svg>
        </button>
      </div>
      <section className="flex min-w-0 flex-1 flex-col bg-[#efefef]">
        <div className="flex h-[31px] items-center justify-between pr-0.5 pl-[9px]">
          项目特征方案
          <button aria-label="展开" className="flex h-4 w-4 items-center justify-center bg-white">
            <svg width="11" height="10" viewBox="0 0 11 10" fill="#0fa6de"><path d="M0 2h5V0l6 5-6 5V8H0z" /></svg>
          </button>
        </div>
        <div className="flex h-[26px] items-center justify-center border border-l-0 border-[#ccc] bg-white">项目特征方案</div>
        <div className="flex-1 bg-white" />
        <div className="flex h-[11px] items-end justify-end pr-[10px]">
          <div className="h-[6px] w-[62px] border border-b-0 border-[#a0a0a0]" />
        </div>
      </section>
      <form className="ml-[6px] w-[223px] shrink-0 overflow-hidden border-t border-l border-[#e3e3e3]">
        <h2 className="flex h-[30px] items-center border-b border-[#e3e3e3] pl-[5px] font-bold">选 项</h2>
        <div className="mt-[13px] flex gap-[14px] pl-[6px] whitespace-nowrap">
          <button type="button" className="h-[23px] w-[116px] shrink-0 border border-[#a0a0a0] bg-white">应用规则到所选清单</button>
          <button type="button" className="h-[23px] w-[116px] shrink-0 border border-[#a0a0a0] bg-white">应用规则到全部清单</button>
        </div>
        <div className="mt-3 flex w-[260px] items-center pl-[11px]">
          <label htmlFor="position" className="w-[92px] shrink-0">添加位置:</label>
          <select id="position" className={field}><option>添加到项目特征列</option></select>
        </div>
        <div className="mt-[22px] flex h-[22px] items-center pl-[5px] font-bold">
          <h3>内容选项</h3>
          <span className="ml-[33px] flex-1 border-t border-dashed border-[#e3e3e3]" />
        </div>
        <div className="mt-[10px] flex w-[260px] items-center pl-[11px]">
          <label htmlFor="extra" className="w-[92px] shrink-0">名称附加内容:</label>
          <select id="extra" className={field}><option>项目特征</option></select>
        </div>
        <div className="mt-[11px] flex w-[260px] items-center pl-[11px]">
          <label htmlFor="mode" className="w-[92px] shrink-0">特征生成方式:</label>
          <select id="mode" className={field}><option>项目特征：项目特征值</option></select>
        </div>
      </form>
    </div>
  );
}

function StatusBar() {
  return (
    <footer className="flex h-[23px] shrink-0 items-end border-t border-[#b4b4b4] bg-[#f0f0f0]">
      <span className="flex h-[18px] items-center border-r border-[#9aa0a8] pr-[26px] pl-[10px]">计税方式：增值税</span>
      {statusItems.map((item) => (
        <span key={item} className="flex h-[18px] items-center border-r border-[#9aa0a8] pr-[27px] pl-4">{item}</span>
      ))}
      <div className="ml-auto flex h-[18px] w-[60px] items-center justify-between border-l border-[#9aa0a8] pl-[21px]">
        <svg width="14" height="13" viewBox="0 0 14 13" fill="none" stroke="#777" strokeWidth="1.500">
          <path d="M1 1h12v11H1z M4 4h6v5H4z M6 6.500h2" />
        </svg>
        <span className="h-3 w-[2px] bg-[#777]" />
      </div>
    </footer>
  );
}

export default function App() {
  return (
    <div className="flex h-screen flex-col overflow-hidden bg-white font-['Noto_Sans','Noto_Sans_CJK_SC',sans-serif] text-xs text-black">
      <TitleBar />
      <MenuBar />
      <Ribbon />
      <main className="flex min-h-0 flex-1">
        <ProjectPanel />
        <div className="flex min-w-0 flex-1 flex-col">
          <nav className="flex h-[37px] shrink-0 items-end border-b-2 border-[#3cb5e3] pt-1">
            {mainTabs.map((tab) => (
              <a
                key={tab}
                href="#tab"
                className={clsx(
                  "relative flex h-8 items-center border-r border-[#ddd] pr-[15px] pl-4",
                  tab === "分部分项" && "font-bold text-[#00a0e9]"
                )}
              >
                {tab}
                {tab === "分部分项" && (
                  <svg width="8" height="4" viewBox="0 0 8 4" fill="#3cb5e3" className="absolute bottom-0 left-9">
                    <path d="M0 4l4-4 4 4z" />
                  </svg>
                )}
              </a>
            ))}
          </nav>
          <div className="flex min-h-0 flex-1">
            <SectionTree />
            <div className="flex min-w-0 flex-1 flex-col pt-px">
              <Grid />
              <div className="flex h-2 shrink-0 justify-center">
                <button aria-label="收起详情" className="ml-5 flex h-[6px] w-[84px] items-center justify-center bg-[#80c269]">
                  <svg width="8" height="5" viewBox="0 0 8 5" fill="none" stroke="#fff"><path d="M1 0l3 4 3-4" /></svg>
                </button>
              </div>
              <nav className="flex h-[31px] shrink-0 border-b border-[#80c269]">
                {detailTabs.map((tab) => (
                  <a
                    key={tab}
                    href="#detail"
                    className={clsx(
                      "flex items-center border-t border-r border-[#aee0a0] pt-0.5 pr-[15px] pl-4",
                      tab === "特征及内容" && "bg-[#80c269] font-bold text-white"
                    )}
                  >
                    {tab}
                  </a>
                ))}
              </nav>
              <DetailPanel />
            </div>
          </div>
        </div>
      </main>
      <StatusBar />
    </div>
  );
}
